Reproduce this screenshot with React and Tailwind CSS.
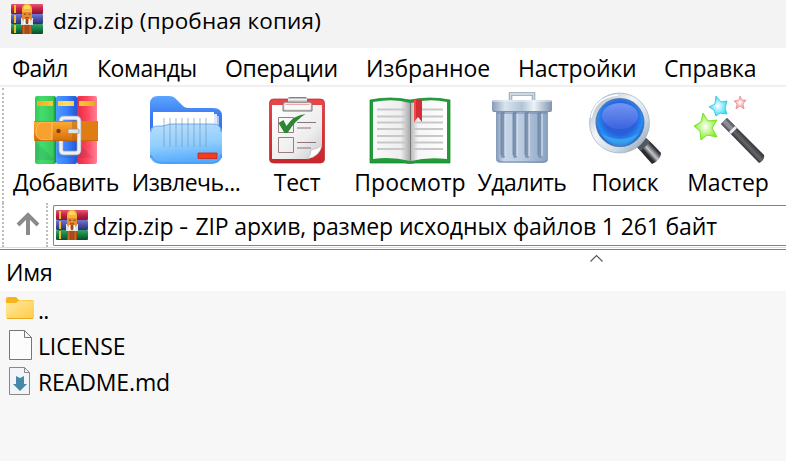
import React from 'react';

function ArchiveIcon({ id }) {
  return (
    <svg width="34" height="32" viewBox="0 0 34 32" className="shrink-0">
      <defs>
        <linearGradient id={id + 'r'} x2="0" y2="1"><stop stopColor="#e65a72" /><stop offset=".45" stopColor="#c42548" /><stop offset="1" stopColor="#8c1232" /></linearGradient>
        <linearGradient id={id + 'b'} x2="0" y2="1"><stop stopColor="#7079cf" /><stop offset=".45" stopColor="#4b55ac" /><stop offset="1" stopColor="#2b3070" /></linearGradient>
        <linearGradient id={id + 'g'} x2="0" y2="1"><stop stopColor="#35a164" /><stop offset=".45" stopColor="#178349" /><stop offset="1" stopColor="#084b27" /></linearGradient>
      </defs>
      <rect x="1" y="1" width="32" height="10" rx="1" fill={`url(#${id}r)`} />
      <rect x="1" y="11" width="32" height="10" rx="1" fill={`url(#${id}b)`} />
      <rect x="1" y="21" width="32" height="10" rx="1" fill={`url(#${id}g)`} />
      <path d="M4 2h2v8H4zM4 12h2v8H4zM4 22h2v8H4z" fill="#f3bd28" />
      <path d="M12 20h10v11H12z" fill="#a94c18" />
      <path d="M13 21h1.500v10H13zM19.500 21h1.500v10h-1.500z" fill="#c4682c" />
      <path d="M11 15h3v7h-3zM20 15h3v7h-3z" fill="#dfe2ea" />
      <path d="M12 6c0-3 2-5 5-5s5 2 5 5v4H12z" fill="#f7b632" />
      <path d="M14 3l3-1 3 1v3h-6z" fill="#ffd75c" />
      <path d="M12 9h10v7l-3 4h-4l-3-4z" fill="#e58a35" />
      <path d="M14 10.500h2v1.500h-2zM18.500 10.500h2v1.500h-2zM15 14h4v1.500h-4z" fill="#a1541d" />
      <path d="M14.500 16v5h5v-5" fill="none" stroke="#fff" strokeWidth="1.500" />
      <path d="M16 16h2v5h-2z" fill="#84513b" />
    </svg>
  );
}

function BooksIcon() {
  return (
    <svg width="70" height="76" viewBox="32 92 70 76">
      <defs>
        <linearGradient id="bg"><stop stopColor="#36c855" /><stop offset=".3" stopColor="#43dc70" /><stop offset=".85" stopColor="#39ca59" /><stop offset="1" stopColor="#168639" /></linearGradient>
        <linearGradient id="bb"><stop stopColor="#4b9cff" /><stop offset=".5" stopColor="#3c80ff" /><stop offset="1" stopColor="#2456d4" /></linearGradient>
        <linearGradient id="br"><stop stopColor="#e52b44" /><stop offset=".5" stopColor="#ff455e" /><stop offset="1" stopColor="#ff8297" /></linearGradient>
        <linearGradient id="belt" x2="0" y2="1"><stop stopColor="#fbae35" /><stop offset=".5" stopColor="#ee8c1b" /><stop offset="1" stopColor="#d56d08" /></linearGradient>
        <linearGradient id="gold"><stop stopColor="#f4ac18" /><stop offset=".5" stopColor="#ffdf59" /><stop offset="1" stopColor="#ebaa20" /></linearGradient>
      </defs>
      <rect x="36" y="96" width="21" height="68" rx="2" fill="url(#bg)" />
      <rect x="57" y="96" width="21" height="68" rx="2" fill="url(#bb)" />
      <rect x="78" y="96" width="20" height="68" rx="2" fill="url(#br)" />
      <path d="M37 160v-18l19 18zM58 158v-16l16 16zM79 158v-16l15 16z" fill="#092954" opacity=".1" />
      <path d="M38 101h16v5H38zM59 101h16v5H59zM80 101h16v5H80z" fill="url(#gold)" />
      <path d="M78 121h21v20H78z" fill="#df7c12" />
      <path d="M62 123v-2q0-3 3-3h12q3 0 3 3v29q0 3-3 3H65q-3 0-3-3v-11" fill="none" stroke="#a9afbc" strokeWidth="4.500" />
      <path d="M62 122v-1q0-3 3-3h12q3 0 3 3v29q0 3-3 3H65q-3 0-3-3v-10" fill="none" stroke="#eef0f6" strokeWidth="3.200" />
      <path d="M54 121h24v20H54z" fill="url(#belt)" />
      <path d="M54 121H36q-1 0-1 3v14q0 3 1 3h18z" fill="url(#belt)" />
      <path d="M53 122h-9c-9 1-10 17 0 18h9z" fill="#f7a22f" stroke="#ffc66a" strokeWidth="1" />
      <path d="M73 121h5v20h-5z" fill="#b9600e" opacity=".5" />
      <path d="M35 121.500h43M35 140.500h43M82 140.500h17" stroke="#b9630b" strokeOpacity=".65" />
      <circle cx="59.500" cy="131" r="2.200" fill="#784019" />
      <rect x="69" y="129" width="11" height="4.500" rx="1" fill="#dfe3ea" stroke="#8e8f99" strokeWidth=".8" />
    </svg>
  );
}

function ExtractIcon() {
  return (
    <svg width="76" height="76" viewBox="148 92 76 76">
      <defs>
        <linearGradient id="fb" x2="0" y2="1"><stop stopColor="#5aa6ff" /><stop offset=".3" stopColor="#3e7cf2" /><stop offset="1" stopColor="#245eda" /></linearGradient>
        <linearGradient id="ff" x2=".15" y2="1"><stop stopColor="#b8dfff" /><stop offset=".55" stopColor="#91cefe" /><stop offset="1" stopColor="#55aafd" /></linearGradient>
      </defs>
      <path d="M150 158v-54q0-8 8-8h11q4 0 6 2l8 8q2 2 5 2h25q9 0 9 8v42z" fill="url(#fb)" />
      <path d="M214 116h5v20h-5z" fill="#a9c4ef" /><path d="M211 114h6v22h-6z" fill="#dce8fb" />
      <path d="M153 112h61v26h-61z" fill="#fff" />
      <path d="M150 133q0-7 7-7h4q3 0 5-1l4-1h42q10 0 10 9v20q0 11-11 11h-49q-12 0-12-11z" fill="url(#ff)" />
      <path d="M164 118v29M170 118v29M176 118v29M182 118v29M188 118v29M194 118v29M200 118v29M206 118v29" stroke="#7b95af" strokeOpacity=".38" strokeWidth="1.800" />
      <path d="M151 132q0-6 7-6h5l7-2h43q8 0 8 8" fill="none" stroke="#4d91df" strokeWidth=".7" />
      <path d="M151 155q3 8 12 8h48q9 0 10-9" fill="none" stroke="#4099ef" />
      <path d="M198 153h19v5.500h-19z" fill="#f83b19" stroke="#c9231c" strokeWidth=".8" />
    </svg>
  );
}

function TestIcon() {
  return (
    <svg width="62" height="76" viewBox="266 92 62 76">
      <defs>
        <linearGradient id="tr" x2="0" y2="1"><stop stopColor="#e94747" /><stop offset=".5" stopColor="#dc3035" /><stop offset="1" stopColor="#c8272c" /></linearGradient>
        <linearGradient id="tp" x2="1" y2="1"><stop stopColor="#fff" /><stop offset=".65" stopColor="#ededee" /><stop offset="1" stopColor="#c9c9ca" /></linearGradient>
        <linearGradient id="tm" x2="0" y2="1"><stop stopColor="#666" /><stop offset=".4" stopColor="#f6f6f6" /><stop offset="1" stopColor="#888" /></linearGradient>
      </defs>
      <rect x="269.500" y="99" width="55" height="64" rx="4" fill="url(#tr)" stroke="#b9292d" strokeWidth=".7" />
      <path d="M272 105h50v40q-2 12-15 14h-35z" fill="url(#tp)" />
      <path d="M322 145q-4 4-11 5 0 6-4 9 13-3 15-14" fill="#fff" stroke="#aaa" strokeWidth=".5" />
      <path d="M283 111v-7q0-2 2-2h25q2 0 2 2v7z" fill="#d6d0d0" stroke="#7a7677" strokeWidth="1" />
      <path d="M285 109v-5h25v5z" fill="#dc4a4d" stroke="#fff" />
      <path d="M285 105h25v4h-25z" fill="#fafafa" />
      <rect x="288" y="97" width="19" height="6" rx="1.500" fill="url(#tm)" />
      <path d="M278.500 117.500h15v15h-15zM278.500 137.500h15v15h-15z" fill="none" stroke="#987f7e" strokeWidth="1" />
      <path d="M297 122.500h19M297 128h14M297 142.500h19M297 148h14" stroke="#887678" strokeWidth="1.200" />
      <path d="M278.500 123l5-3 3 6q7-11 19-12-10 6-18 19h-3z" fill="#2b8731" />
    </svg>
  );
}

function BookIcon() {
  return (
    <svg width="84" height="76" viewBox="368 92 84 76">
      <defs>
        <linearGradient id="pl"><stop stopColor="#f9f9fb" /><stop offset=".75" stopColor="#eee" /><stop offset="1" stopColor="#aaa" /></linearGradient>
        <linearGradient id="pr"><stop stopColor="#bbb" /><stop offset=".2" stopColor="#f5f5f5" /><stop offset="1" stopColor="#fff" /></linearGradient>
      </defs>
      <path d="M370 100q20-4 40 0 20-4 40 0v63h-35q-5 1-10 0h-35z" fill="#239b38" stroke="#13822b" strokeWidth=".7" />
      <path d="M373 102q21-4 37 1v58q-19-5-37-2z" fill="url(#pl)" />
      <path d="M411 103q18-5 36-1v57q-20-2-36 2z" fill="url(#pr)" />
      <path d="M377 109.500h30M377 116.500h30M377 122.500h30M377 129h30M377 136h30M377 142.500h30M377 149h30M414 109.500h29M414 116.500h29M414 122.500h29M414 129h29M414 136h29M414 142.500h29M414 149h29" stroke="#c8c8ca" strokeWidth="1.800" />
      <path d="M410.500 102v60" stroke="#777" strokeWidth="1" />
      <path d="M414 100h8v22l-4-5-4 5z" fill="#d72d32" /><path d="M414 100h2v19l-2 3z" fill="#ed4c49" />
    </svg>
  );
}

function TrashIcon() {
  return (
    <svg width="66" height="76" viewBox="489 92 66 76">
      <defs>
        <linearGradient id="tc"><stop stopColor="#8298b6" /><stop offset=".15" stopColor="#c8d6e7" /><stop offset=".5" stopColor="#b9cadf" /><stop offset="1" stopColor="#8aa2c0" /></linearGradient>
        <linearGradient id="tl"><stop stopColor="#869bb5" /><stop offset=".22" stopColor="#dae4ee" /><stop offset=".5" stopColor="#b1c4d7" /><stop offset=".7" stopColor="#edf3f8" /><stop offset="1" stopColor="#8094ae" /></linearGradient>
      </defs>
      <path d="M510.500 101v-7h23v7" fill="none" stroke="#8b9fae" strokeWidth="3.500" /><path d="M510.500 101v-7h23v7" fill="none" stroke="#ced8df" strokeWidth="1.800" />
      <path d="M496 109h52v50q0 4-5 4h-42q-5 0-5-4z" fill="url(#tc)" />
      <path d="M503 113v43M515 113v43M527 113v43M540 113v43" stroke="#7d94b4" strokeWidth="4" strokeLinecap="round" />
      <path d="M501 113v42M513 113v42M525 113v42M538 113v42" stroke="#647d9c" strokeWidth=".8" />
      <path d="M505 113v43M517 113v43M529 113v43M542 113v43" stroke="#dde7f1" strokeWidth="1.200" />
      <path d="M497 111h50v3h-50z" fill="#6883a6" opacity=".45" />
      <path d="M498 160q2 2 5 2h39q3 0 5-2" fill="none" stroke="#7189a8" />
      <rect x="492" y="100" width="60" height="12" rx="2" fill="url(#tl)" /><path d="M493 101h58" stroke="#edf3f8" /><path d="M493 111.500h58" stroke="#7d93ae" />
    </svg>
  );
}

function SearchIcon() {
  return (
    <svg width="76" height="76" viewBox="588 92 76 76">
      <defs>
        <radialGradient id="sg" cy=".42" r=".56"><stop stopColor="#3159d2" /><stop offset=".6" stopColor="#285fdd" /><stop offset=".85" stopColor="#278eef" /><stop offset="1" stopColor="#245bcf" /></radialGradient>
        <linearGradient id="sm" x2="1" y2="1"><stop stopColor="#9dadbd" /><stop offset=".4" stopColor="#f2f6fa" /><stop offset=".7" stopColor="#ccd9e4" /><stop offset="1" stopColor="#7c93a8" /></linearGradient>
        <linearGradient id="sh" x1="0" y1="1" x2="1" y2="0"><stop stopColor="#16171a" /><stop offset=".4" stopColor="#2b2c30" /><stop offset=".52" stopColor="#c5c7cd" /><stop offset=".68" stopColor="#292a2e" /><stop offset="1" stopColor="#666" /></linearGradient>
        <linearGradient id="shine" x2="0" y2="1"><stop stopColor="#9bb2ff" /><stop offset="1" stopColor="#436ae1" /></linearGradient>
      </defs>
      <path d="M638 147l9-9q6 5 15 15 0 7-9 11z" fill="url(#sh)" /><path d="M638 147l9-9 4 4-9 9z" fill="#54585f" />
      <circle cx="620.500" cy="123" r="30" fill="url(#sm)" stroke="#a1b0be" strokeWidth=".7" />
      <circle cx="621" cy="122.500" r="24.500" fill="#5577af" />
      <circle cx="621" cy="122.500" r="23.500" fill="url(#sg)" />
      <path d="M601 132q8 14 20 14t20-14q-8 7-20 7t-20-7" fill="#41bdf5" opacity=".5" />
      <ellipse cx="621" cy="116" rx="18" ry="13" fill="url(#shine)" opacity=".65" />
      <path d="M592 118q4-21 27-23" fill="none" stroke="#fff" strokeWidth="1.500" />
    </svg>
  );
}

function WizardIcon() {
  return (
    <svg width="78" height="76" viewBox="690 92 78 76">
      <defs>
        <radialGradient id="wg"><stop stopColor="#fff" /><stop offset="1" stopColor="#88ee26" /></radialGradient>
        <radialGradient id="wb"><stop stopColor="#fff" /><stop offset="1" stopColor="#42dcf5" /></radialGradient>
        <radialGradient id="wr"><stop stopColor="#fff" /><stop offset="1" stopColor="#f28f94" /></radialGradient>
        <linearGradient id="wh" x1="0" y1="1" x2="1" y2="0"><stop offset=".4" stopColor="#161619" /><stop offset=".5" stopColor="#65666b" /><stop offset=".6" stopColor="#28282c" /></linearGradient>
      </defs>
      <path d="M704 113l5 8 9-1-5 8 5 9-10-2-6 5-1-9-6-5 7-4z" fill="url(#wg)" stroke="#75e426" />
      <path d="M717 96l5 6 6-1-2 7 2 6-7-1-4 3-2-6-5-3 6-3z" fill="url(#wb)" stroke="#38ccee" />
      <path d="M741 96l2 4h4l-3 4 1 5-4-3-4 3 1-5-3-3 5-1z" fill="url(#wr)" stroke="#ee8b8e" strokeWidth=".8" />
      <path d="M722 124l6-6 37 37q1 5-5 8z" fill="url(#wh)" />
      <path d="M722 124l6-6 8 8-6 6z" fill="#606268" /><path d="M723.500 122.500l3-3 8 8-3 3z" fill="#8c8e93" />
      <path d="M730 132l6-6 2 2-6 6z" fill="#edf0f3" />
    </svg>
  );
}

const menu = [
  ['Файл', 'ml-3 w-[85px] tracking-[-0.8px]'],
  ['Команды', 'w-[128px] tracking-[-0.45px]'],
  ['Операции', 'w-[141px] tracking-[-0.35px]'],
  ['Избранное', 'w-[152px] tracking-[-0.1px]'],
  ['Настройки', 'w-[146px] tracking-[-0.25px]'],
  ['Справка', 'w-[100px] tracking-[-0.15px]'],
];
const tools = [
  ['Добавить', BooksIcon, 'w-[118px] tracking-[-0.3px]'],
  ['Извлечь...', ExtractIcon, 'w-[122px] tracking-[-0.5px]'],
  ['Тест', TestIcon, 'w-[100px] tracking-[-0.2px]'],
  ['Просмотр', BookIcon, 'w-[126px]'],
  ['Удалить', TrashIcon, 'w-[98px] tracking-[-0.5px]'],
  ['Поиск', SearchIcon, 'w-[108px] tracking-[-0.2px]'],
  ['Мастер', WizardIcon, 'w-[98px] tracking-[-0.1px]'],
];

export default function App() {
  return (
    <div className="flex h-[461px] w-[786px] flex-col overflow-hidden bg-white font-['Open_Sans','Noto_Sans',sans-serif] text-[23px] leading-8 whitespace-nowrap text-black">
      <header className="flex h-12 shrink-0 bg-[#f3f3f3] pt-[3px] pl-[10px]">
        <ArchiveIcon id="title" />
        <h1 className="ml-[9px] pt-[2px] text-[22.5px] tracking-[0.15px]">dzip.zip (пробная копия)</h1>
      </header>
      <nav className="flex h-[37px] shrink-0 pt-[4px]">
        {menu.map(([name, cls]) => <span key={name} className={`shrink-0 ${cls}`}>{name}</span>)}
      </nav>
      <div className="h-[2px] shrink-0 bg-[#f0f0f0]" />
      <div className="flex h-[116px] shrink-0 pl-[2px]">
        <div className="mt-px w-[5px] shrink-0 border-l-2 border-dotted border-[#bdbdbd]" />
        {tools.map(([name, Icon, cls]) => (
          <button key={name} className={`flex shrink-0 flex-col items-center pt-[5px] ${cls}`}>
            <Icon /><span className="mt-[-2px]">{name}</span>
          </button>
        ))}
      </div>
      <div className="flex h-[44px] shrink-0 pl-[2px]">
        <div className="w-[14px] shrink-0 border-l-2 border-dotted border-[#bdbdbd]" />
        <svg width="30" height="42" viewBox="16 203 30 42" className="shrink-0"><path d="M28 235v-20M18 225l10-10 10 10" fill="none" stroke="#8b8b8b" strokeWidth="4" /></svg>
        <div className="w-[7px] shrink-0 border-l-2 border-dotted border-[#bdbdbd]" />
        <div className="mt-[2px] flex h-[41px] flex-1 items-center rounded-l-[2px] border border-r-0 border-[#828282] pb-[2px] pl-[1px]">
          <ArchiveIcon id="address" />
          <span className="ml-[4px] pt-[3px] tracking-[-0.13px]">dzip.zip <span className="mr-[3px] inline-block origin-left scale-x-125">-</span> ZIP архив, размер исходных файлов 1 261 байт</span>
        </div>
      </div>
      <div className="h-[3px] shrink-0 border-t border-b border-t-[#dedede] border-b-[#7d8289]" />
      <div className="flex h-[41px] shrink-0">
        <span className="w-[590px] pt-[6px] pl-[6px] tracking-[-0.2px]">Имя</span>
        <svg width="13" height="8" viewBox="0 0 13 8" className="mt-1"><path d="M.5 7.5l6-6 6 6" fill="none" stroke="#555" strokeWidth="1.1" /></svg>
      </div>
      <main className="flex-1 bg-[#f7f7f7]">
        <div className="flex h-9">
          <svg width="38" height="36" viewBox="0 291 38 36" className="shrink-0">
            <defs><linearGradient id="folder" x2="1" y2="1"><stop stopColor="#ffe9a0" /><stop offset="1" stopColor="#ffcb45" /></linearGradient></defs>
            <path d="M6 303v-4q0-2 2-2h8l3 3h14l1 3z" fill="#f7b51b" /><path d="M6 303h10l3-2.5h15V317q0 2-2 2H8q-2 0-2-2z" fill="url(#folder)" /><path d="M7 318.5h26" stroke="#eca920" />
          </svg>
          <span className="pt-[3px] tracking-[-0.8px]">..</span>
        </div>
        <div className="flex h-9">
          <svg width="38" height="36" viewBox="0 327 38 36" className="shrink-0"><path d="M9.500 330.500h15l7 7v22h-22zM24.500 330.500v7h7" fill="#fcfcfc" stroke="#777" /></svg>
          <span className="pt-[3px] tracking-[-0.15px]">LICENSE</span>
        </div>
        <div className="flex h-9">
          <svg width="38" height="36" viewBox="0 363 38 36" className="shrink-0"><path d="M9.500 367.500h15l5 5v22h-20zM24.500 367.500v5h5" fill="#f3f4f7" stroke="#888" /><path d="M16 376l4 2 4-2v8h3l-7 7-7-7h3z" fill="#4588a8" /></svg>
          <span className="pt-[3px] tracking-[-0.12px]">README.md</span>
        </div>
      </main>
    </div>
  );
}
